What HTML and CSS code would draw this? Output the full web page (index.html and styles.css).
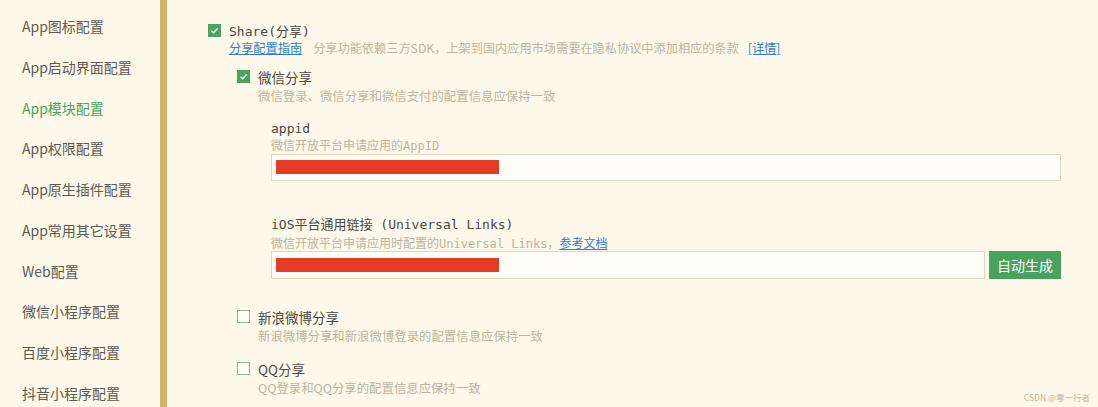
FILE: index.html
```html
<!DOCTYPE html>
<html lang="zh">
<head>
<meta charset="utf-8">
<link rel="stylesheet" href="styles.css">
</head>
<body>
<div class="page">
  <nav class="sidebar">
    <div class="nav-item">App图标配置</div>
    <div class="nav-item">App启动界面配置</div>
    <div class="nav-item active">App模块配置</div>
    <div class="nav-item">App权限配置</div>
    <div class="nav-item">App原生插件配置</div>
    <div class="nav-item">App常用其它设置</div>
    <div class="nav-item">Web配置</div>
    <div class="nav-item">微信小程序配置</div>
    <div class="nav-item">百度小程序配置</div>
    <div class="nav-item">抖音小程序配置</div>
  </nav>
  <div class="divider"></div>
  <main class="content">
    <div class="check-row share-row">
      <span class="cb checked"><svg viewBox="0 0 13 13"><path d="M3.4 6.7 L5.6 8.8 L9.6 4.6" fill="none" stroke="#fff" stroke-width="1.4"/></svg></span>
      <span class="title mono">Share(分享)</span>
    </div>
    <div class="note share-note"><a class="link">分享配置指南</a><span class="gap">分享功能依赖三方SDK，上架到国内应用市场需要在隐私协议中添加相应的条款</span><a class="link">[详情]</a></div>

    <div class="sub">
      <div class="check-row">
        <span class="cb checked"><svg viewBox="0 0 13 13"><path d="M3.4 6.7 L5.6 8.8 L9.6 4.6" fill="none" stroke="#fff" stroke-width="1.4"/></svg></span>
        <span class="title">微信分享</span>
      </div>
      <div class="note">微信登录、微信分享和微信支付的配置信息应保持一致</div>

      <div class="field field-appid">
        <div class="label mono">appid</div>
        <div class="note mono">微信开放平台申请应用的AppID</div>
        <div class="input-row">
          <div class="input"><span class="redact"></span></div>
        </div>
      </div>

      <div class="field field-ios">
        <div class="label mono">iOS平台通用链接 (Universal Links)</div>
        <div class="note mono">微信开放平台申请应用时配置的Universal Links，<a class="link">参考文档</a></div>
        <div class="input-row">
          <div class="input input-short"><span class="redact"></span></div>
          <button class="btn">自动生成</button>
        </div>
      </div>

      <div class="check-row sina-row">
        <span class="cb"></span>
        <span class="title">新浪微博分享</span>
      </div>
      <div class="note">新浪微博分享和新浪微博登录的配置信息应保持一致</div>

      <div class="check-row qq-row">
        <span class="cb"></span>
        <span class="title">QQ分享</span>
      </div>
      <div class="note">QQ登录和QQ分享的配置信息应保持一致</div>
    </div>
  </main>
  <div class="watermark">CSDN @零一行者</div>
</div>
</body>
</html>
```

FILE: styles.css
```css
html, body {
  margin: 0;
  padding: 0;
  background: #fdf8e9;
}
body {
  font-family: "Noto Sans CJK SC", "Noto Sans", sans-serif;
  color: #5a5850;
  width: 1098px;
  height: 407px;
  overflow: hidden;
}
.page {
  display: flex;
  height: 407px;
  position: relative;
}
.sidebar {
  width: 160px;
  padding-top: 6px;
  box-sizing: border-box;
  flex: none;
}
.nav-item {
  height: 40.75px;
  line-height: 40px;
  padding-left: 22px;
  font-size: 14px;
  color: #5d5b53;
}
.nav-item.active {
  color: #48a565;
}
.divider {
  width: 7px;
  flex: none;
  background: #d3b568;
}
.content {
  flex: 1;
  padding-left: 41px;
  padding-top: 20px;
  box-sizing: border-box;
}
.mono {
  font-family: "DejaVu Sans Mono", "Noto Sans CJK SC", monospace;
}
.check-row {
  display: flex;
  align-items: center;
  height: 21px;
}
.cb {
  width: 13px;
  height: 13px;
  box-sizing: border-box;
  border: 1.3px solid #86bf95;
  background: #fffdf4;
  margin-right: 8px;
  flex: none;
  display: flex;
}
.cb.checked {
  background: #4aa35e;
  border-color: #4aa35e;
}
.cb svg {
  width: 13px;
  height: 13px;
  margin: -1.3px;
}
.title {
  font-size: 13.5px;
  color: #4a4842;
}
.title.mono {
  font-size: 13px;
}
.note {
  font-size: 12.4px;
  color: #bab5a4;
  line-height: 18px;
  padding-left: 21px;
}
.note.mono {
  font-size: 12px;
  padding-left: 0;
}
.share-note {
  margin-top: -2px;
  font-size: 12.2px;
}
.gap {
  margin: 0 9px 0 11px;
}
.link {
  color: #2e7fd4;
  text-decoration: underline;
}
.sub {
  padding-left: 29px;
  margin-top: 9px;
}
.field {
  padding-left: 34px;
}
.field-appid {
  margin-top: 15px;
}
.label {
  font-size: 13px;
  color: #4a4842;
  line-height: 18px;
}
.field .note {
  margin-top: -1px;
}
.field-ios .note {
  margin-top: 1px;
}
.input-row {
  display: flex;
  margin-right: 37px;
  margin-top: -1px;
  gap: 4px;
}
.field-ios .input-row {
  margin-top: -2px;
}
.input {
  flex: 1;
  height: 27px;
  box-sizing: border-box;
  border: 1px solid #ddd8c2;
  background: #fffdf4;
  padding: 5px 0 0 4px;
}
.input-short {
  height: 28px;
  padding-top: 6px;
}
.redact {
  display: block;
  width: 223px;
  height: 14px;
  background: #e53c25;
}
.field-ios {
  margin-top: 35px;
}
.btn {
  flex: none;
  width: 72px;
  height: 28px;
  border: none;
  background: #47a25e;
  color: #fff;
  font-family: "Noto Sans CJK SC", sans-serif;
  font-size: 14px;
  padding: 0;
}
.sina-row {
  margin-top: 27px;
}
.qq-row {
  margin-top: 13px;
}
.watermark {
  position: absolute;
  right: 8px;
  bottom: 4px;
  font-size: 8.5px;
  color: #bdb8a8;
}
```
